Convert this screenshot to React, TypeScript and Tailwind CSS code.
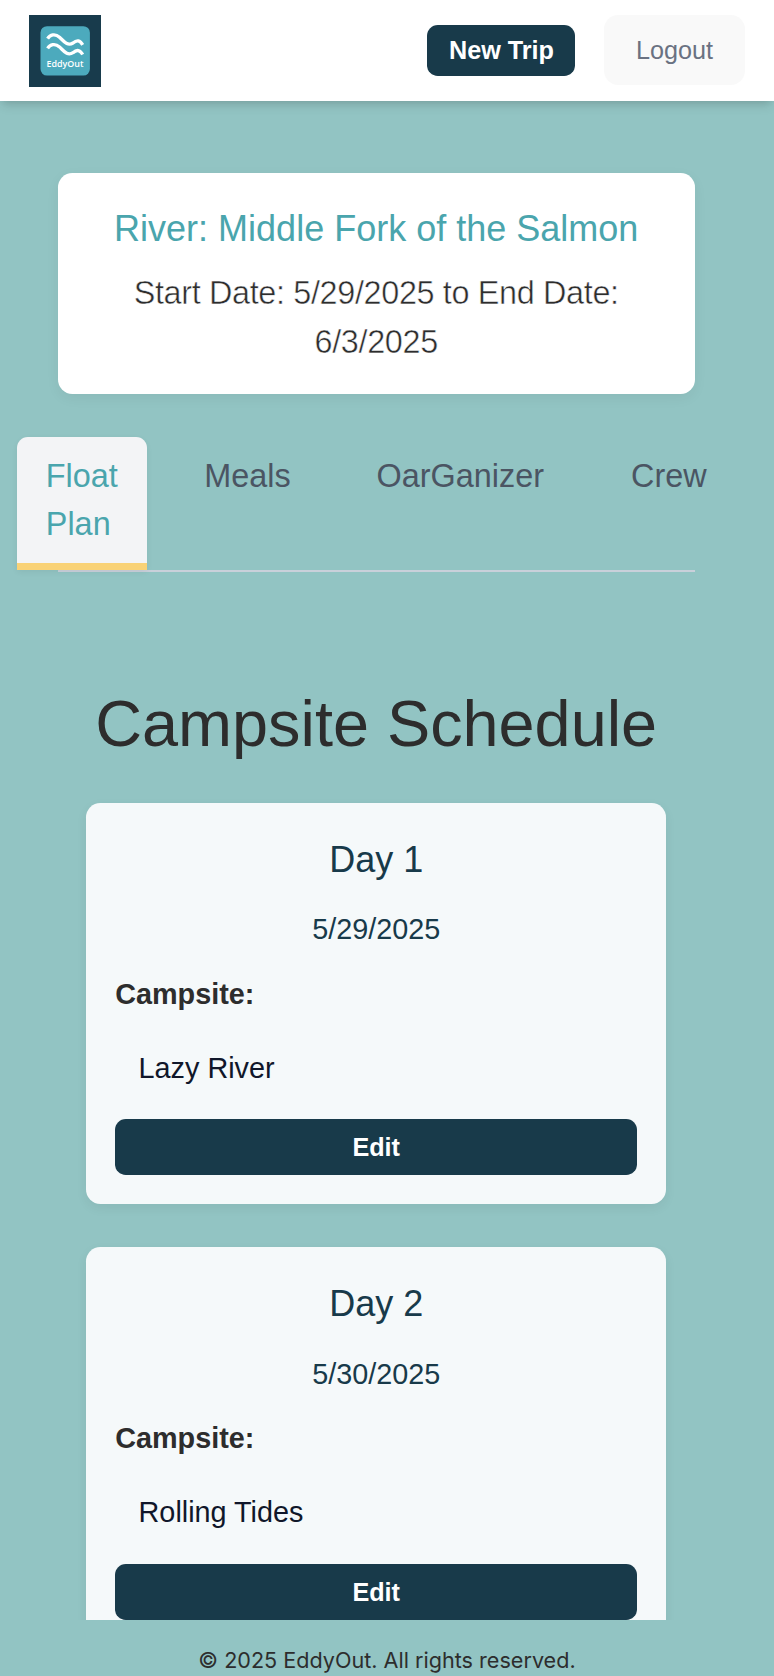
import React from "react";

type Day = { day: number; date: string; campsite: string };

const days: Day[] = [
  { day: 1, date: "5/29/2025", campsite: "Lazy River" },
  { day: 2, date: "5/30/2025", campsite: "Rolling Tides" },
];

const tabs = [
  { label: "Float Plan", width: "w-[129.6px]", active: true },
  { label: "Meals", width: "w-[143.6px]", active: false },
  { label: "OarGanizer", width: "w-[225.6px]", active: false },
  { label: "Crew", width: "w-[132.4px]", active: false },
];

function Logo() {
  return (
    <svg viewBox="0 0 72 72" className="mt-[0.8px] size-[72px] shrink-0" aria-label="EddyOut">
      <rect width="72" height="72" fill="#183b4c" />
      <rect x="11.5" y="11.2" width="49.4" height="49.4" rx="6.5" fill="#4caabd" />
      <g fill="none" stroke="#fff" strokeWidth="3.3">
        <path d="M18.6 23.6C21 19.8 26 18.2 30.5 22.2C35 26.500 38.500 31.500 44 28C48 24.500 51 25.200 53.700 29.800" />
        <path d="M18.6 33.300C21 29.500 26 27.900 30.500 31.900C35 36.200 38.500 41.200 44 37.700C48 34.200 51 34.900 53.700 39.500" />
      </g>
      <text x="36" y="52.400" textAnchor="middle" textLength="37" lengthAdjust="spacingAndGlyphs" fill="#fff" className="font-['Open_Sans',sans-serif] text-[9px] font-semibold">
        EddyOut
      </text>
    </svg>
  );
}

function Header() {
  return (
    <header className="relative z-10 flex h-[100.800px] shrink-0 items-center justify-between bg-white px-[28.8px] shadow-[0_7.2px_10.8px_-1.8px_rgba(0,0,0,0.12),0_3.6px_7.2px_-3.6px_rgba(0,0,0,0.12)]">
      <Logo />
      <div className="flex items-center gap-[28.8px]">
        <button className="h-[50.4px] w-[148.600px] rounded-[10.8px] bg-[#183a4a] pt-[2px] pl-[1px] text-[25.2px] font-bold text-white">
          New Trip
        </button>
        <button className="h-[70px] w-[141.200px] rounded-[14.4px] bg-[#f9f9f9] pt-[2px] text-[25.2px] text-gray-500">
          Logout
        </button>
      </div>
    </header>
  );
}

function TripCard() {
  return (
    <section className="h-[220.8px] rounded-[14.4px] bg-white p-[28.8px] text-center shadow-[0_4px_14px_rgba(0,0,0,0.05)]">
      <h2 className="text-[36px] leading-[54px] whitespace-nowrap text-[#4aa5ad]">
        River: Middle Fork of the Salmon
      </h2>
      <p className="mt-[13.8px] text-[32.4px] leading-[48.2px] tracking-[-0.35px] text-[#2d2d2d] [-webkit-text-stroke:0.5px_white]">
        Start Date: 5/29/2025 to End Date:
        <br />
        6/3/2025
      </p>
    </section>
  );
}

function Tabs() {
  return (
    <nav className="mt-[43.2px] flex h-[135.6px] justify-center gap-[28.8px] border-b-2 border-[#c9d0da]">
      {tabs.map((tab) => (
        <button
          key={tab.label}
          className={`flex shrink-0 items-start rounded-t-[10.8px] px-[28.4px] pt-[15.4px] text-left text-[32.4px] leading-[48.2px] ${tab.width} ${
            tab.active
              ? "border-b-[7.2px] border-[#f9d276] bg-gray-100 text-[#4aa5ad] shadow-[0_2px_6px_rgba(0,0,0,0.06)]"
              : "text-[#4b5563]"
          }`}
        >
          {tab.label}
        </button>
      ))}
    </nav>
  );
}

function DayCard({ day, date, campsite }: Day) {
  return (
    <article className="shrink-0 rounded-[14.4px] bg-[#f5f9fa] p-[28.8px] shadow-[0_4px_12px_rgba(0,0,0,0.06)]">
      <h3 className="pt-[1px] text-center text-[36px] leading-[54px] text-[#183a4a]">Day {day}</h3>
      <p className="mt-[21.4px] text-center text-[28.8px] leading-[43.2px] text-[#183a4a]">{date}</p>
      <p className="mt-[21.6px] text-[28.8px] leading-[43.2px] font-bold text-[#2d2d2d]">Campsite:</p>
      <p className="mt-[30.600px] px-[23.4px] text-[28.8px] leading-[43.2px] text-[#10172a]">{campsite}</p>
      <button className="mt-[29.500px] h-[56.1px] w-full rounded-[10.8px] bg-[#183a4a] pt-[1.5px] text-[25.2px] font-bold text-white">
        Edit
      </button>
    </article>
  );
}

export default function App() {
  return (
    <div className="flex h-[1676px] w-[774px] flex-col overflow-hidden bg-[#92c4c3] font-['Liberation_Sans',Arial,sans-serif]">
      <Header />
      <main className="h-[1519.200px] shrink-0 overflow-hidden pt-[72px] pr-[79.2px] pl-[57.6px]">
        <TripCard />
        <Tabs />
        <section className="px-[28.8px] pt-[115.400px]">
          <h1 className="text-center text-[64.8px] leading-[72px] whitespace-nowrap text-[#2d2d2d]">
            Campsite Schedule
          </h1>
          <div className="mt-[43px] flex flex-col gap-[43.2px]">
            {days.map((d) => (
              <DayCard key={d.day} {...d} />
            ))}
          </div>
        </section>
      </main>
      <footer className="flex h-[56px] shrink-0 justify-center pt-[25px] font-['Inter',sans-serif] text-[21.6px] leading-[31px] text-[#2d2d2d]">
        © 2025 EddyOut. All rights reserved.
      </footer>
    </div>
  );
}
